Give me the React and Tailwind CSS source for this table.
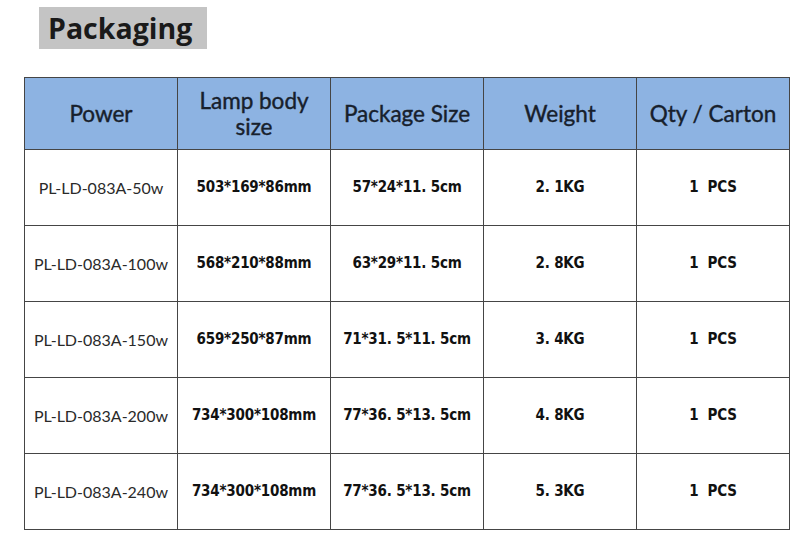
const rows = [
  ["PL-LD-083A-50w", "503*169*86mm", "57*24*11. 5cm", "2. 1KG", "1  PCS"],
  ["PL-LD-083A-100w", "568*210*88mm", "63*29*11. 5cm", "2. 8KG", "1  PCS"],
  ["PL-LD-083A-150w", "659*250*87mm", "71*31. 5*11. 5cm", "3. 4KG", "1  PCS"],
  ["PL-LD-083A-200w", "734*300*108mm", "77*36. 5*13. 5cm", "4. 8KG", "1  PCS"],
  ["PL-LD-083A-240w", "734*300*108mm", "77*36. 5*13. 5cm", "5. 3KG", "1  PCS"],
];

const headers = ["Power", "Lamp body size", "Package Size", "Weight", "Qty / Carton"];

export default function App() {
  return (
    <div className="w-[800px] h-[540px] bg-white overflow-hidden pt-[7px]">
      <div className="ml-[39px] w-[168px] h-[42px] bg-[#c4c4c4] flex items-center pl-[9px]">
        <span className="text-[28.5px] font-bold text-[#1a1a1a] leading-none font-['Open_Sans',sans-serif]">
          Packaging
        </span>
      </div>

      <table className="ml-[24px] mt-[28px] w-[766px] border-collapse table-fixed">
        <thead>
          <tr className="h-[72px] bg-[#8db3e2]">
            {headers.map((h, i) => (
              <th
                key={h}
                className={`border border-[#454545] font-normal text-[#17202c] text-[22.5px] leading-[26px] font-['Lato',sans-serif] [-webkit-text-stroke:0.4px_#17202c] ${
                  i === 1 ? "px-[18px]" : "px-0"
                }`}
              >
                {h}
              </th>
            ))}
          </tr>
        </thead>
        <tbody>
          {rows.map((r) => (
            <tr key={r[0]} className="h-[76px]">
              <td className="border border-[#454545] text-center text-[16px] text-[#2a2a2a] font-['Lato',sans-serif]">
                {r[0]}
              </td>
              {r.slice(1).map((c, j) => (
                <td
                  key={j}
                  className="border border-[#454545] text-center text-[15px] font-bold text-[#111] whitespace-pre tracking-[-0.2px] font-['Liberation_Sans_Narrow','DejaVu_Sans_Condensed',sans-serif]"
                >
                  {c}
                </td>
              ))}
            </tr>
          ))}
        </tbody>
      </table>
    </div>
  );
}
